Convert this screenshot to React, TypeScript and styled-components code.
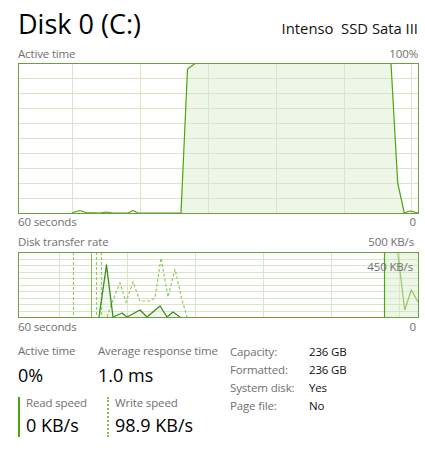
import React from "react";
import styled, { createGlobalStyle } from "styled-components";

const GlobalStyle = createGlobalStyle`
  html, body { margin: 0; padding: 0; background: #ffffff; }
  body { font-family: "Open Sans", "Noto Sans", sans-serif; color: #000; }
`;

const LINE = "#4da60c";
const BORDER = "#6b9e3c";
const GRID = "#d6e6c8";
const FILL = "#eef6e8";

const Page = styled.div`
  width: 400px;
  padding: 6px 7px 0 18px;
`;

const Header = styled.div`
  display: flex;
  justify-content: space-between;
  align-items: baseline;
  height: 36px;
  margin-bottom: 4px;
`;

const Title = styled.h1`
  margin: 0;
  font-weight: 400;
  font-size: 27px;
  line-height: 36px;
  color: #000;
`;

const Model = styled.div`
  font-size: 14.8px;
  color: #111;
  white-space: pre;
`;

const LabelRow = styled.div<{ $top?: number; $bottom?: number }>`
  display: flex;
  justify-content: space-between;
  font-size: 11.5px;
  letter-spacing: -0.15px;
  line-height: 16px;
  color: #707070;
  margin-top: ${(p) => p.$top ?? 0}px;
  margin-bottom: ${(p) => p.$bottom ?? 1}px;
`;

const RightLabel = styled.span<{ $pad?: number }>`
  padding-right: ${(p) => p.$pad ?? 0}px;
`;

const ChartSvg = styled.svg`
  display: block;
`;

const Stats = styled.div`
  display: flex;
  margin-top: 8px;
`;

const LeftStats = styled.div`
  width: 212px;
  display: flex;
  flex-direction: column;
`;

const StatRow = styled.div`
  display: flex;
`;

const Stat = styled.div<{ $w: number }>`
  width: ${(p) => p.$w}px;
  display: flex;
  flex-direction: column;
`;

const StatLabel = styled.div`
  font-size: 11.5px;
  letter-spacing: -0.15px;
  line-height: 16px;
  color: #707070;
  white-space: nowrap;
`;

const StatValue = styled.div`
  font-size: 18px;
  line-height: 32px;
  color: #000;
  white-space: nowrap;
`;

const Speed = styled.div<{ $w: number; $dashed?: boolean }>`
  width: ${(p) => p.$w}px;
  margin-top: 6px;
  padding-left: 6px;
  box-sizing: border-box;
  border-left: 2px ${(p) => (p.$dashed ? "dotted" : "solid")} ${(p) => (p.$dashed ? "#7cc242" : LINE)};
  display: flex;
  flex-direction: column;
  height: 40px;
`;

const SpeedLabel = styled(StatLabel)`
  line-height: 12px;
`;

const InfoGrid = styled.div`
  display: grid;
  grid-template-columns: 79px auto;
  grid-auto-rows: 18px;
  align-items: center;
  margin-top: -1px;
  font-size: 11.5px;
  letter-spacing: -0.15px;
`;

const InfoKey = styled.div`
  color: #707070;
`;

const InfoVal = styled.div`
  color: #111;
`;

function Grid({ w, h, rows, cols }: { w: number; h: number; rows: number; cols: number[] }) {
  const lines = [];
  for (let i = 1; i < rows; i++) {
    const y = Math.round((h * i) / rows) + 0.5;
    lines.push(<line key={"r" + i} x1={0} x2={w} y1={y} y2={y} stroke={GRID} strokeWidth={1} />);
  }
  cols.forEach((x, i) =>
    lines.push(<line key={"c" + i} x1={x + 0.5} x2={x + 0.5} y1={0} y2={h} stroke={GRID} strokeWidth={1} />)
  );
  return <g>{lines}</g>;
}

function ActiveChart() {
  const W = 401;
  const H = 151;
  const pts: [number, number][] = [
    [72, 213], [76, 211.5], [80, 210.5], [86, 212.5], [100, 213], [106.7, 212], [113, 213],
    [128, 213], [133, 210.5], [138, 213], [181, 213], [187.5, 69], [195, 63.5], [391, 63.5],
    [397.7, 183], [404.3, 213], [410, 211], [418, 213],
  ].map(([x, y]) => [x - 18, y - 63] as [number, number]);
  const line = pts.map((p) => p.join(",")).join(" ");
  const fill = [[181 - 18, 150], [187.5 - 18, 6], [195 - 18, 0.5], [391 - 18, 0.5], [397.7 - 18, 120], [404.3 - 18, 150]]
    .map((p) => p.join(","))
    .join(" ");
  return (
    <ChartSvg width={W} height={H} viewBox={`0 0 ${W} ${H}`}>
      <polygon points={fill} fill={FILL} />
      <Grid w={W} h={150} rows={10} cols={[54, 122, 190, 258, 326, 393]} />
      <polyline points={line} fill="none" stroke={LINE} strokeWidth={1.2} strokeLinejoin="round" />
      <rect x={0.5} y={0.5} width={W - 1} height={H - 1} fill="none" stroke={BORDER} strokeWidth={1} />
    </ChartSvg>
  );
}

function TransferChart() {
  const W = 401;
  const H = 66;
  const ox = 18;
  const oy = 252;
  const tr = (arr: number[][]) => arr.map(([x, y]) => `${x - ox},${y - oy}`).join(" ");
  const write = tr([
    [107, 317], [113, 300], [120, 283], [126, 302], [133, 282], [140, 301], [150, 301], [155, 298],
    [161, 258], [168, 297], [175, 269], [182, 300], [187, 317],
  ]);
  const read = tr([
    [99, 317], [106.5, 265], [113, 317], [122, 313], [127, 317], [140, 310], [147, 317], [160, 306],
    [167, 317], [173, 312], [180, 317],
  ]);
  const rightWrite = tr([[397.7, 252], [404.7, 310], [411.3, 290], [418, 302]]);
  return (
    <ChartSvg width={W} height={H} viewBox={`0 0 ${W} ${H}`}>
      <polygon points={`${read} 162,65 81,65`} fill="#f3f9ee" />
      <rect x={384 - ox} y={0} width={418 - 384} height={H} fill={FILL} />
      <Grid w={W} h={65} rows={10} cols={[41, 109, 177, 245, 313, 381]} />
      <g stroke="#93c863" strokeWidth={1.2} strokeDasharray="3 2" fill="none">
        <line x1={73.5 - ox} x2={73.5 - ox} y1={0} y2={H} />
        <line x1={96.5 - ox} x2={96.5 - ox} y1={0} y2={H} />
        <line x1={101.5 - ox} x2={101.5 - ox} y1={0} y2={H} />
        <polyline points={write} />
        <polyline points={rightWrite} strokeDasharray="none" />
      </g>
      <line x1={91.5 - ox} x2={91.5 - ox} y1={0} y2={H} stroke="#7fbf4a" strokeWidth={1} />
      <polyline points={read} fill="none" stroke="#3f8a1c" strokeWidth={1.3} strokeLinejoin="round" />
      <line x1={384.5 - ox} x2={384.5 - ox} y1={0} y2={H} stroke={LINE} strokeWidth={1.2} />
      <rect x={0.5} y={0.5} width={W - 1} height={H - 1} fill="none" stroke={BORDER} strokeWidth={1} />
    </ChartSvg>
  );
}

const ChartWrap = styled.div`
  position: relative;
`;

const OverLabel = styled.div`
  position: absolute;
  right: 5px;
  top: 7px;
  font-size: 11.5px;
  letter-spacing: -0.15px;
  line-height: 16px;
  color: #707070;
`;

export default function App() {
  return (
    <>
      <GlobalStyle />
      <Page>
        <Header>
          <Title>Disk 0 (C:)</Title>
          <Model>{"Intenso  SSD Sata III"}</Model>
        </Header>

        <LabelRow>
          <span>Active time</span>
          <RightLabel>100%</RightLabel>
        </LabelRow>
        <ActiveChart />
        <LabelRow $bottom={0}>
          <span>60 seconds</span>
          <RightLabel $pad={2}>0</RightLabel>
        </LabelRow>

        <LabelRow $top={4} $bottom={2}>
          <span>Disk transfer rate</span>
          <RightLabel $pad={4}>500 KB/s</RightLabel>
        </LabelRow>
        <ChartWrap>
          <TransferChart />
          <OverLabel>450 KB/s</OverLabel>
        </ChartWrap>
        <LabelRow $top={1} $bottom={0}>
          <span>60 seconds</span>
          <RightLabel $pad={2}>0</RightLabel>
        </LabelRow>

        <Stats>
          <LeftStats>
            <StatRow>
              <Stat $w={80}>
                <StatLabel>Active time</StatLabel>
                <StatValue>0%</StatValue>
              </Stat>
              <Stat $w={132}>
                <StatLabel>Average response time</StatLabel>
                <StatValue>1.0 ms</StatValue>
              </Stat>
            </StatRow>
            <StatRow>
              <Speed $w={89}>
                <SpeedLabel>Read speed</SpeedLabel>
                <StatValue>0 KB/s</StatValue>
              </Speed>
              <Speed $w={110} $dashed>
                <SpeedLabel>Write speed</SpeedLabel>
                <StatValue>98.9 KB/s</StatValue>
              </Speed>
            </StatRow>
          </LeftStats>
          <InfoGrid>
            <InfoKey>Capacity:</InfoKey>
            <InfoVal>236 GB</InfoVal>
            <InfoKey>Formatted:</InfoKey>
            <InfoVal>236 GB</InfoVal>
            <InfoKey>System disk:</InfoKey>
            <InfoVal>Yes</InfoVal>
            <InfoKey>Page file:</InfoKey>
            <InfoVal>No</InfoVal>
          </InfoGrid>
        </Stats>
      </Page>
    </>
  );
}
